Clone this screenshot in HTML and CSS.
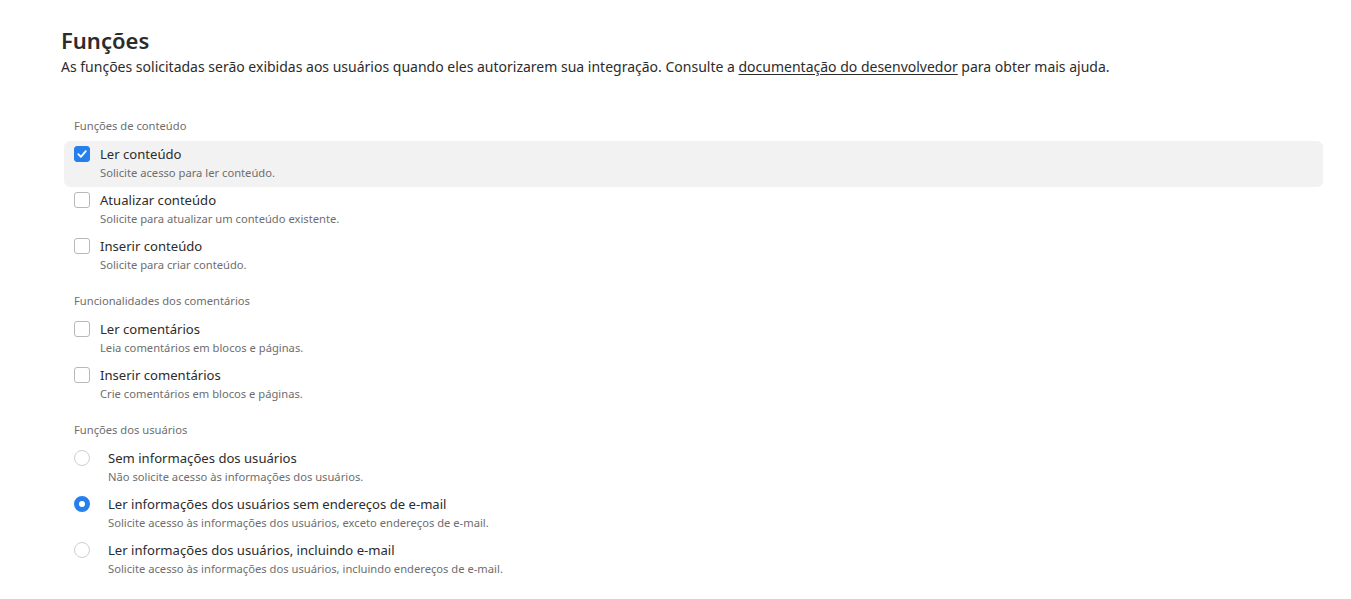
FILE: index.html
```html
<!DOCTYPE html>
<html>
<head>
    <title>Funções</title>
    <link rel="stylesheet" href="styles.css">
</head>
<body>
    <div class="page">
        <h1>Funções</h1>
        <p class="intro">As funções solicitadas serão exibidas aos usuários quando eles autorizarem sua integração. Consulte a <a href="#">documentação do desenvolvedor</a> para obter mais ajuda.</p>

        <div class="group">
            <div class="group-label">Funções de conteúdo</div>
            <div class="option selected">
                <span class="check checked"><svg width="12" height="12" viewBox="0 0 12 12"><path d="M2.3 6.2 L4.9 8.8 L9.8 3.2" fill="none" stroke="#fff" stroke-width="1.8" stroke-linecap="round" stroke-linejoin="round"/></svg></span>
                <div class="text">
                    <div class="title">Ler conteúdo</div>
                    <div class="desc">Solicite acesso para ler conteúdo.</div>
                </div>
            </div>
            <div class="option">
                <span class="check"></span>
                <div class="text">
                    <div class="title">Atualizar conteúdo</div>
                    <div class="desc">Solicite para atualizar um conteúdo existente.</div>
                </div>
            </div>
            <div class="option">
                <span class="check"></span>
                <div class="text">
                    <div class="title">Inserir conteúdo</div>
                    <div class="desc">Solicite para criar conteúdo.</div>
                </div>
            </div>
        </div>

        <div class="group">
            <div class="group-label">Funcionalidades dos comentários</div>
            <div class="option">
                <span class="check"></span>
                <div class="text">
                    <div class="title">Ler comentários</div>
                    <div class="desc">Leia comentários em blocos e páginas.</div>
                </div>
            </div>
            <div class="option">
                <span class="check"></span>
                <div class="text">
                    <div class="title">Inserir comentários</div>
                    <div class="desc">Crie comentários em blocos e páginas.</div>
                </div>
            </div>
        </div>

        <div class="group">
            <div class="group-label">Funções dos usuários</div>
            <div class="option radio-option">
                <span class="radio"></span>
                <div class="text">
                    <div class="title">Sem informações dos usuários</div>
                    <div class="desc">Não solicite acesso às informações dos usuários.</div>
                </div>
            </div>
            <div class="option radio-option">
                <span class="radio checked"></span>
                <div class="text">
                    <div class="title">Ler informações dos usuários sem endereços de e-mail</div>
                    <div class="desc">Solicite acesso às informações dos usuários, exceto endereços de e-mail.</div>
                </div>
            </div>
            <div class="option radio-option">
                <span class="radio"></span>
                <div class="text">
                    <div class="title">Ler informações dos usuários, incluindo e-mail</div>
                    <div class="desc">Solicite acesso às informações dos usuários, incluindo endereços de e-mail.</div>
                </div>
            </div>
        </div>
    </div>
</body>
</html>
```

FILE: styles.css
```css
body {
    font-family: "Noto Sans", "Open Sans", sans-serif;
    background-color: #fff;
    color: #2c2c2c;
    margin: 0;
    padding: 0;
}
.page {
    padding: 26px 28px 0 61px;
}
h1 {
    font-size: 22px;
    font-weight: 600;
    line-height: 28px;
    margin: 0 0 2px 0;
    color: #2c2c2c;
}
.intro {
    font-size: 14px;
    line-height: 22px;
    margin: 0 0 40px 0;
    color: #2c2c2c;
}
.intro a {
    color: #2c2c2c;
    text-decoration: underline;
    text-underline-offset: 2px;
}
.group {
    margin-bottom: 14px;
}
.group-label {
    font-size: 11.2px;
    line-height: 16px;
    color: #6e6e6e;
    padding-left: 13px;
    margin-bottom: 7px;
}
.option {
    display: flex;
    align-items: flex-start;
    gap: 10px;
    padding: 3px 10px 5px 10px;
    margin-left: 3px;
    border-radius: 6px;
    height: 38px;
}
.option.selected {
    background: #f2f2f2;
}
.check {
    flex: none;
    width: 14px;
    height: 14px;
    margin-top: 2px;
    border: 1px solid #b8b8b8;
    border-radius: 3px;
    background: #fff;
    display: flex;
    align-items: center;
    justify-content: center;
}
.check.checked {
    background: #2680eb;
    border-color: #2680eb;
}
.radio {
    flex: none;
    width: 14px;
    height: 14px;
    margin-top: 2px;
    margin-right: 8px;
    border: 1px solid #cfcfcf;
    border-radius: 50%;
    background: #fff;
}
.radio.checked {
    width: 6px;
    height: 6px;
    border: 5px solid #2680eb;
}
.title {
    font-size: 13.1px;
    line-height: 20px;
}
.desc {
    font-size: 11.2px;
    line-height: 18px;
    color: #6e6e6e;
}
```
